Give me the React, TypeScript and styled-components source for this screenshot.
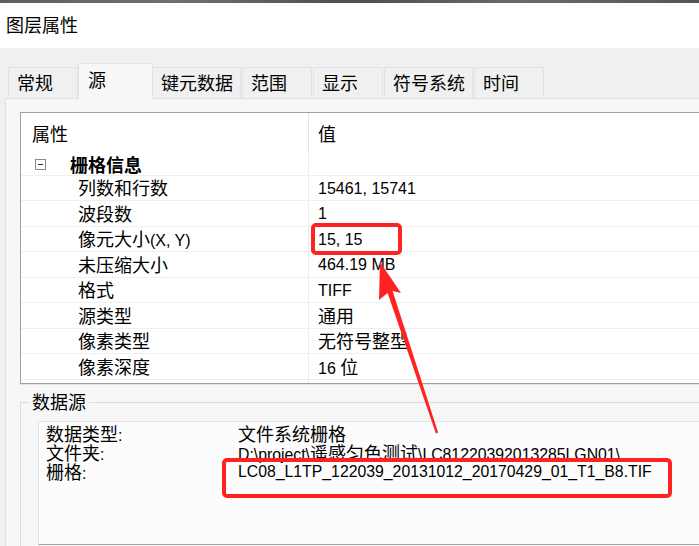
import React from "react";
import styled, { createGlobalStyle } from "styled-components";

const Global = createGlobalStyle`
  html, body { margin: 0; padding: 0; background: #f0f0f0; overflow: hidden; }
  body { font-family: "Liberation Sans", "Noto Sans CJK SC", sans-serif; color: #000; }
`;

const Window = styled.div`
  position: relative;
  width: 699px;
  height: 546px;
  display: flex;
  flex-direction: column;
  overflow: hidden;
  background: #f0f0f0;
`;

const DesktopStrip = styled.div`
  flex: none;
  height: 3px;
  background: linear-gradient(90deg, #5e5e5e, #707070 25%, #4e4e4e 50%, #6a6a6a 75%, #555);
`;

const TitleBar = styled.div`
  flex: none;
  height: 45px;
  background: #fff;
  display: flex;
  align-items: center;
  padding-left: 6px;
  padding-bottom: 3px;
  box-sizing: border-box;
`;

const Han = styled.span`
  font-family: "Noto Sans CJK SC", sans-serif;
  font-size: 18px;
`;

const Run = styled.span`
  white-space: pre;
`;

const Body = styled.div`
  flex: 1;
  min-height: 0;
  display: flex;
  flex-direction: column;
  padding: 15px 0 0 5px;
`;

const TabStrip = styled.div`
  flex: none;
  position: relative;
  z-index: 1;
  display: flex;
  align-items: flex-end;
  height: 35px;
  padding-left: 3px;
`;

const Tab = styled.div<{ $active?: boolean }>`
  box-sizing: border-box;
  display: flex;
  align-items: center;
  min-width: ${(p) => (p.$active ? 75 : 70)}px;
  height: ${(p) => (p.$active ? 36 : 31)}px;
  padding: 0 7px 0 ${(p) => (p.$active ? 9 : 8)}px;
  padding-bottom: ${(p) => (p.$active ? 5 : 2)}px;
  margin: 0 ${(p) => (p.$active ? -1 : 1)}px ${(p) => (p.$active ? -1 : 0)}px ${(p) => (p.$active ? -1 : 0)}px;
  border: 1px solid #e2e2e2;
  border-bottom: none;
  background: ${(p) => (p.$active ? "#f7f7f7" : "#f0f0f0")};
  position: relative;
  z-index: ${(p) => (p.$active ? 2 : 1)};
  white-space: nowrap;
`;

const Panel = styled.div`
  flex: 1;
  width: 720px;
  background: #f7f7f7;
  border-top: 1px solid #e0e0e0;
  border-left: 1px solid #e0e0e0;
  padding: 13px 0 0 14px;
`;

const Grid = styled.div`
  box-sizing: border-box;
  width: 700px;
  height: 272px;
  background: #fff;
  border: 1px solid #a0a0a0;
  border-right: none;
  box-shadow: 0 1px 0 #e4e4e4;
  overflow: hidden;
  display: grid;
  grid-template-columns: 288px 1fr;
  grid-auto-rows: 25.5px;
  grid-template-rows: 37px 25.5px;
  font-size: 16px;
`;

const HeadCell = styled.div<{ $first?: boolean }>`
  display: flex;
  align-items: center;
  padding: 3px 0 0 ${(p) => (p.$first ? 11 : 9)}px;
  border-right: ${(p) => (p.$first ? "1px solid #e6e6e6" : "none")};
`;

const GroupCell = styled.div<{ $first?: boolean }>`
  box-sizing: border-box;
  display: flex;
  align-items: center;
  padding: 4px 0 0 14px;
  gap: 24px;
  border-bottom: 1px solid #efefef;
  border-right: ${(p) => (p.$first ? "1px solid #ececec" : "none")};
  font-weight: 700;
`;

const ToggleBox = styled.span`
  box-sizing: border-box;
  width: 11px;
  height: 11px;
  border: 1px solid #8a8a8a;
  display: flex;
  align-items: center;
  justify-content: center;
  &::after {
    content: "";
    width: 5px;
    height: 1px;
    background: #333;
  }
`;

const Cell = styled.div<{ $first?: boolean }>`
  box-sizing: border-box;
  display: flex;
  align-items: center;
  padding-left: ${(p) => (p.$first ? 57 : 9)}px;
  padding-top: 2px;
  border-bottom: 1px solid #efefef;
  border-right: ${(p) => (p.$first ? "1px solid #ececec" : "none")};
  white-space: nowrap;
  line-height: 24px;
`;

const GroupBox = styled.fieldset`
  margin: 8px 0 0 0;
  padding: 0;
  min-width: 0;
  border: 1px solid #dcdcdc;
  border-right: none;
  height: 200px;
`;

const Legend = styled.legend`
  margin-left: 8px;
  padding: 0 3px;
  line-height: 18px;
`;

const SourceBox = styled.div`
  box-sizing: border-box;
  margin: 8px 0 0 17px;
  height: 124px;
  background: #fcfcfc;
  border-top: 1px solid #e4e4e4;
  border-left: 1px solid #e4e4e4;
  border-bottom: 1px solid #a4a4a4;
  padding: 2px 0 0 7px;
  display: grid;
  grid-template-columns: 192px 1fr;
  grid-auto-rows: 19px;
  align-content: start;
  font-size: 15.8px;
  line-height: 19px;
  white-space: nowrap;
`;

const Annotations = styled.svg`
  position: absolute;
  left: 0;
  top: 0;
  pointer-events: none;
`;

const HAN = /([\u2E80-\u9FFF\uF900-\uFAFF]+)/;

function Mixed({ text }: { text: string }) {
  const parts = text.split(HAN);
  return (
    <Run>
      {parts.map((s, i) =>
        s === "" ? null : i % 2 === 1 ? <Han key={i}>{s}</Han> : <React.Fragment key={i}>{s}</React.Fragment>
      )}
    </Run>
  );
}

const tabs = ["常规", "源", "键元数据", "范围", "显示", "符号系统", "时间"];

const rows: [string, string][] = [
  ["列数和行数", "15461, 15741"],
  ["波段数", "1"],
  ["像元大小(X, Y)", "15, 15"],
  ["未压缩大小", "464.19 MB"],
  ["格式", "TIFF"],
  ["源类型", "通用"],
  ["像素类型", "无符号整型"],
  ["像素深度", "16 位"],
  ["", ""],
];

const source: [string, string][] = [
  ["数据类型:", "文件系统栅格"],
  ["文件夹:", "D:\\project\\遥感匀色测试\\LC81220392013285LGN01\\"],
  ["栅格:", "LC08_L1TP_122039_20131012_20170429_01_T1_B8.TIF"],
];

export default function App() {
  return (
    <Window>
      <Global />
      <DesktopStrip />
      <TitleBar>
        <Han>图层属性</Han>
      </TitleBar>
      <Body>
        <TabStrip>
          {tabs.map((t) => (
            <Tab key={t} $active={t === "源"}>
              <Han>{t}</Han>
            </Tab>
          ))}
        </TabStrip>
        <Panel>
          <Grid>
            <HeadCell $first>
              <Han>属性</Han>
            </HeadCell>
            <HeadCell>
              <Han>值</Han>
            </HeadCell>
            <GroupCell $first>
              <ToggleBox />
              <Han>栅格信息</Han>
            </GroupCell>
            <GroupCell />
            {rows.map(([k, v], i) => (
              <React.Fragment key={i}>
                <Cell $first>
                  <Mixed text={k} />
                </Cell>
                <Cell>
                  <Mixed text={v} />
                </Cell>
              </React.Fragment>
            ))}
          </Grid>
          <GroupBox>
            <Legend>
              <Han>数据源</Han>
            </Legend>
            <SourceBox>
              {source.map(([k, v]) => (
                <React.Fragment key={k}>
                  <div>
                    <Mixed text={k} />
                  </div>
                  <div>
                    <Mixed text={v} />
                  </div>
                </React.Fragment>
              ))}
            </SourceBox>
          </GroupBox>
        </Panel>
      </Body>
      <Annotations width="699" height="546" viewBox="0 0 699 546">
        <rect x="313" y="225" width="87" height="28" rx="3" fill="none" stroke="#ff2222" strokeWidth="4" />
        <rect x="224" y="460" width="446" height="36" rx="3" fill="none" stroke="#ff2222" strokeWidth="4" />
        <polygon
          points="380,262 401,293 392.6,291 438.1,432.6 435.9,433.4 387.6,293 379,300"
          fill="#ff2222"
        />
      </Annotations>
    </Window>
  );
}
